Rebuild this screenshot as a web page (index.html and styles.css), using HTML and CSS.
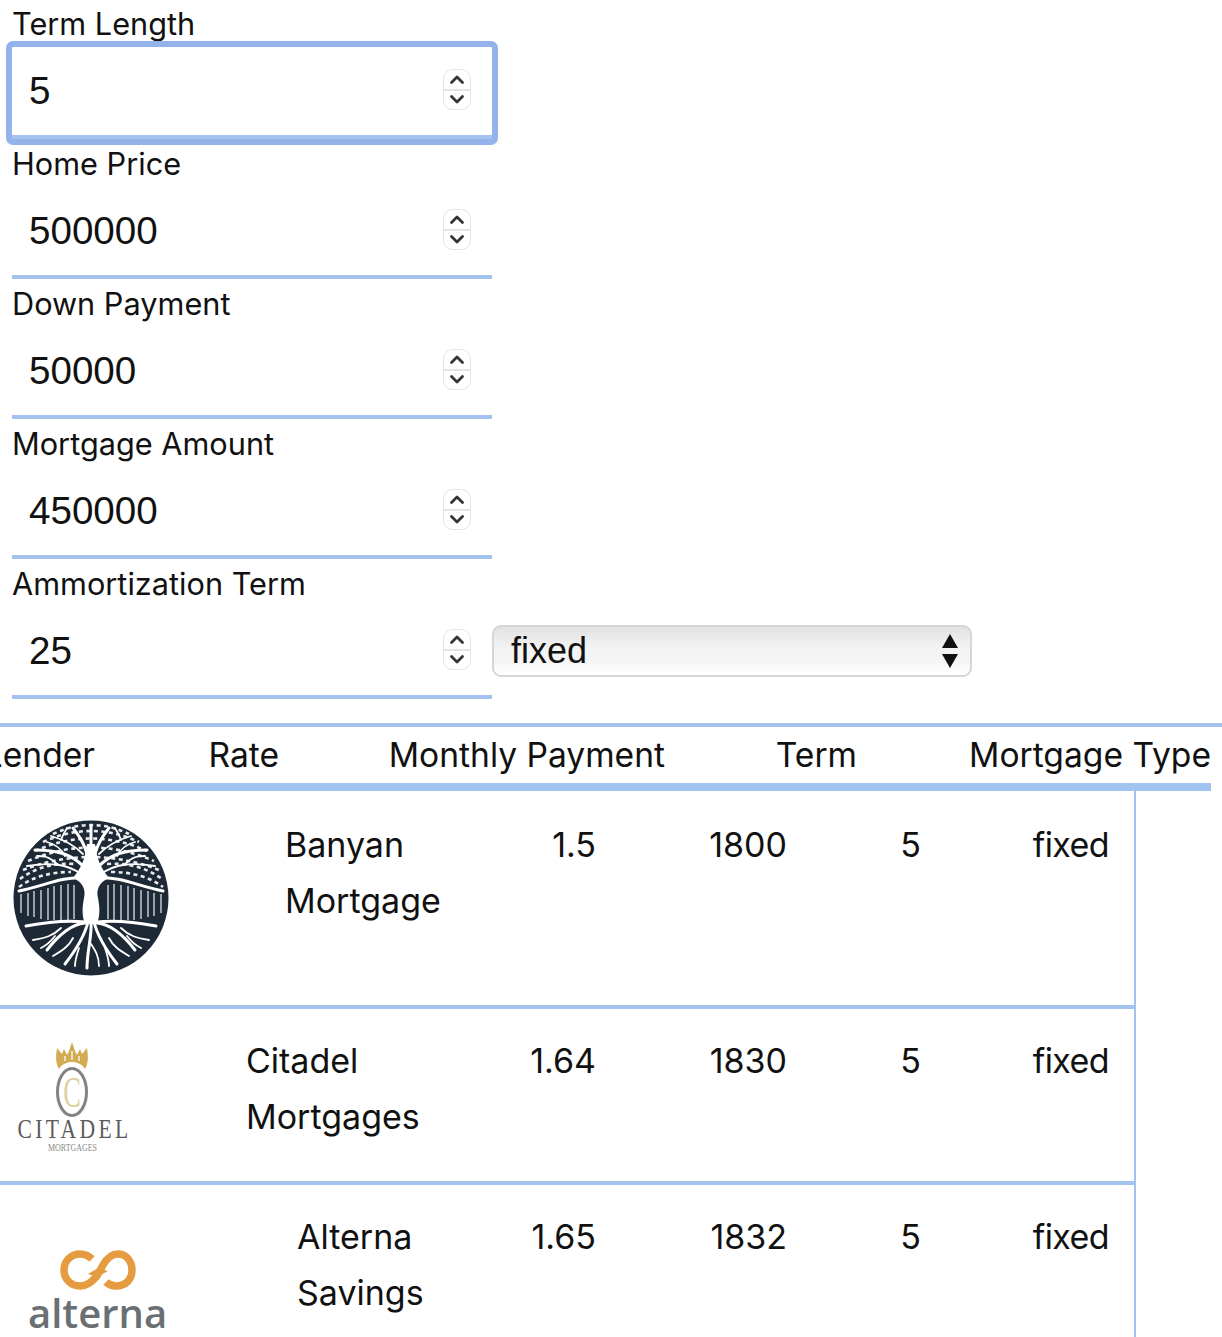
FILE: index.html
```html
<!DOCTYPE html>
<html lang="en">
<head>
<meta charset="utf-8">
<title>Mortgage rates</title>
<link rel="stylesheet" href="styles.css">
</head>
<body>
<form class="form">
  <div class="group">
    <div class="label">Term Length</div>
    <div class="field-row">
      <div class="field field-focus"><span class="value">5</span>
        <svg class="spin" viewBox="0 0 28 41"><rect x=".5" y=".5" width="27" height="40" rx="9"/><path class="mid" d="M1 21h26"/><path class="chev" d="M8.500 13.500 14 8l5.500 5.500M8.500 27.500 14 33l5.500-5.500"/></svg>
      </div>
    </div>
  </div>
  <div class="group">
    <div class="label">Home Price</div>
    <div class="field-row">
      <div class="field"><span class="value">500000</span>
        <svg class="spin" viewBox="0 0 28 41"><rect x=".5" y=".5" width="27" height="40" rx="9"/><path class="mid" d="M1 21h26"/><path class="chev" d="M8.500 13.500 14 8l5.500 5.500M8.500 27.500 14 33l5.500-5.500"/></svg>
      </div>
    </div>
  </div>
  <div class="group">
    <div class="label">Down Payment</div>
    <div class="field-row">
      <div class="field"><span class="value">50000</span>
        <svg class="spin" viewBox="0 0 28 41"><rect x=".5" y=".5" width="27" height="40" rx="9"/><path class="mid" d="M1 21h26"/><path class="chev" d="M8.500 13.500 14 8l5.500 5.500M8.500 27.500 14 33l5.500-5.500"/></svg>
      </div>
    </div>
  </div>
  <div class="group">
    <div class="label">Mortgage Amount</div>
    <div class="field-row">
      <div class="field"><span class="value">450000</span>
        <svg class="spin" viewBox="0 0 28 41"><rect x=".5" y=".5" width="27" height="40" rx="9"/><path class="mid" d="M1 21h26"/><path class="chev" d="M8.500 13.500 14 8l5.500 5.500M8.500 27.500 14 33l5.500-5.500"/></svg>
      </div>
    </div>
  </div>
  <div class="group">
    <div class="label">Ammortization Term</div>
    <div class="field-row">
      <div class="field"><span class="value">25</span>
        <svg class="spin" viewBox="0 0 28 41"><rect x=".5" y=".5" width="27" height="40" rx="9"/><path class="mid" d="M1 21h26"/><path class="chev" d="M8.500 13.500 14 8l5.500 5.500M8.500 27.500 14 33l5.500-5.500"/></svg>
      </div>
      <div class="select"><span>fixed</span>
        <svg class="select-arrows" viewBox="0 0 16 34"><path d="M8 0l8 14H0zM0 20h16L8 34z"/></svg>
      </div>
    </div>
  </div>
</form>

<section class="table">
  <div class="head">
    <div class="th">Lender</div>
    <div class="th">Rate</div>
    <div class="th">Monthly Payment</div>
    <div class="th">Term</div>
    <div class="th">Mortgage Type</div>
  </div>
  <div class="body">
    <div class="row row-banyan">
      <div class="lender">
        <svg class="logo logo-banyan" viewBox="0 0 156 156">
          <circle cx="78" cy="78" r="77.500" fill="#1e2936"/>
          <g class="bars">
            <path d="M8 74V93M15 73V96M21 71V97M28 70V99M35 68V100M41 66V100M48 65V100M55 64V100M61 65V99"/>
            <path d="M95 65V99M101 64V100M108 65V100M115 66V100M121 68V100M128 70V99M135 71V97M141 73V96M148 74V93"/>
          </g>
          <g class="leaves">
            <path d="M40 14Q78-4 116 14"/>
            <path d="M30 22Q78 0 126 22"/>
            <path d="M22 31Q78 6 134 31"/>
            <path d="M15 41Q78 14 141 41"/>
            <path d="M10 50Q78 24 146 50"/>
            <path d="M7 59Q30 42 62 44M94 44Q126 42 149 59"/>
            <path d="M6 67Q26 52 58 52M98 52Q130 52 150 67"/>
          </g>
          <path class="trunk" d="M60 58C70 62 73 70 71 78C69 88 69 96 72 104H84C87 96 87 88 85 78C83 70 86 62 96 58C88 48 84 40 82 24H74C72 40 68 48 60 58Z"/>
          <g class="branches">
            <path class="bough" d="M70 58C52 56 30 66 6 71M86 58C104 56 126 66 150 71"/>
            <path class="bough" d="M74 34C72 26 68 18 60 8M82 34C84 26 88 18 96 8M78 30V6"/>
            <path class="bough" d="M70 46C58 34 44 30 22 30M86 46C98 34 112 30 134 30"/>
            <path d="M68 54C54 44 38 42 14 46M88 54C102 44 118 42 142 46"/>
            <path d="M70 34C62 26 52 20 38 16M86 34C94 26 104 20 118 16"/>
            <path d="M52 36C48 28 42 24 34 22M104 36C108 28 114 24 122 22M44 44C36 36 30 36 24 36M112 44C120 36 126 36 132 36M48 20C50 14 52 12 54 8M108 20C106 14 104 12 102 8"/>
          </g>
          <g class="roots">
            <path class="bough" d="M75 102C72 114 66 126 52 144M81 102C84 114 90 126 104 144M78 102C79 118 74 130 74 148"/>
            <path class="bough" d="M72 103C60 104 48 112 34 130M84 103C96 104 108 112 122 130"/>
            <path class="bough" d="M72 102C54 100 34 102 13 106M84 102C102 100 122 102 143 106"/>
            <path d="M48 108C40 116 32 118 20 120M108 108C116 116 124 118 136 120M60 118C56 126 50 130 40 136M96 118C100 126 106 130 116 136M78 124C82 130 86 136 86 146M66 128C64 134 62 140 62 146M92 128C94 134 96 140 96 146M42 116C36 124 32 126 28 128M114 116C120 124 124 126 128 128"/>
          </g>
        </svg>
        <div class="name name-banyan">Banyan<br>Mortgage</div>
      </div>
      <div class="td">1.5</div><div class="td">1800</div><div class="td">5</div><div class="td td-type">fixed</div>
    </div>
    <div class="row row-citadel">
      <div class="lender">
        <svg class="logo logo-citadel" viewBox="0 0 114 112">
          <path d="M43 27C39 20 40 13 41 6L46 12 48 7 51 13 53 9 56 0 59 9 61 13 64 7 66 12 71 6C72 13 73 20 69 27C66 22 61 20 56 20C51 20 46 22 43 27Z" fill="#d3ab52"/>
          <path class="crown-cut" d="M49 14V19M56 9V18M63 14V19"/>
          <ellipse cx="56" cy="50" rx="14.500" ry="23.500" fill="none" stroke="#85837f" stroke-width="3"/>
          <text class="citadel-c" transform="translate(56 65) scale(.6 1)">C</text>
          <text class="citadel-name" transform="translate(58.500 96) scale(.8 1)">CITADEL</text>
          <text class="citadel-sub" x="32" y="109" textLength="49" lengthAdjust="spacingAndGlyphs">MORTGAGES</text>
        </svg>
        <div class="name name-citadel">Citadel<br>Mortgages</div>
      </div>
      <div class="td">1.64</div><div class="td">1830</div><div class="td">5</div><div class="td td-type">fixed</div>
    </div>
    <div class="row row-alterna">
      <div class="lender">
        <svg class="logo logo-alterna" viewBox="0 0 140 85">
          <path class="alterna-mark" d="M64 9C60 5 56 4 52 4C43 4 36 11 36 20C36 29 43 36 52 36C60 36 64 31 69 26L75 15C79 8 84 4 90 4C98 4 104 11 104 20C104 29 98 36 88 36C84 36 81 35 78 32"/>
          <path class="alterna-tip" d="M60 24 70 18 80 21 69 27Z"/>
          <text class="alterna-word" x="0" y="78">alterna</text>
        </svg>
        <div class="name name-alterna">Alterna<br>Savings</div>
      </div>
      <div class="td">1.65</div><div class="td">1832</div><div class="td">5</div><div class="td td-type">fixed</div>
    </div>
  </div>
</section>
</body>
</html>
```
FILE: styles.css
```css
html, body { margin: 0; padding: 0; background: #fff; }
body {
  height: 1337px;
  overflow: hidden;
  color: #111;
  font-family: "Liberation Sans", Arial, sans-serif;
}
.form { display: flex; flex-direction: column; }
.group { display: flex; flex-direction: column; }
.label {
  height: 48px;
  padding-left: 12px;
  font-family: Inter, "Liberation Sans", sans-serif;
  font-size: 30.700px;
  line-height: 50px;
}
.group:first-child .label { margin-top: -1px; }
.field-row { display: flex; align-items: center; padding-left: 12px; }
.field {
  box-sizing: border-box;
  display: flex;
  align-items: center;
  justify-content: space-between;
  width: 480px;
  height: 92px;
  padding: 0 21px 0 17px;
  border-bottom: 4px solid #a3c3ee;
}
.field-focus { outline: 6px solid #94b3ea; border-radius: 1px; }
.value { font-size: 38.600px; }
.spin { width: 28px; height: 41px; flex: none; margin-bottom: 4px; }
.spin rect { fill: #fff; stroke: #e4e4e4; }
.spin .mid { stroke: #dcdcdc; stroke-width: 1.500; fill: none; }
.spin .chev { stroke: #333; stroke-width: 2.800; fill: none; stroke-linecap: round; stroke-linejoin: round; }
.select {
  box-sizing: border-box;
  display: flex;
  align-items: center;
  justify-content: space-between;
  width: 480px;
  height: 52px;
  margin-bottom: 4px;
  padding: 0 12px 0 17px;
  border: 2px solid #d6d6d6;
  border-radius: 9px;
  background: linear-gradient(#e2e2e2, #f3f3f3 45%, #f6f6f6 75%, #fff);
  font-size: 36px;
}
.select-arrows { width: 16px; height: 34px; fill: #111; }

.table { margin-top: 28px; }
.head {
  display: grid;
  grid-template-columns: 95px 184px 386px 192px 354px;
  width: 1211px;
  height: 56px;
  position: relative;
  border-bottom: 8px solid #a1c3f0;
}
.head::before {
  content: "";
  position: absolute;
  left: 0;
  top: -4px;
  width: 1222px;
  height: 4px;
  background: #a3c3ee;
}
.th {
  display: flex;
  justify-content: flex-end;
  white-space: nowrap;
  font-family: Inter, "Liberation Sans", sans-serif;
  font-size: 33.600px;
  line-height: 56px;
}
.body { width: 1136px; box-sizing: border-box; border-right: 2px solid #a3c3ee; }
.row {
  display: grid;
  grid-template-columns: 460px 136px 191px 134px 188px;
  box-sizing: border-box;
  padding-top: 24px;
  border-bottom: 4px solid #a3c3ee;
  font-family: Inter, "Liberation Sans", sans-serif;
  font-size: 34px;
  line-height: 56px;
}
.row-banyan { height: 218px; padding-top: 26px; }
.row-citadel { height: 176px; }
.row-alterna { height: 152px; border-bottom: 0; }
.td { text-align: right; }
.td-type { letter-spacing: -.6px; }
.lender { display: flex; align-items: flex-start; }
.name { white-space: nowrap; }
.logo { flex: none; display: block; }
.logo-banyan { width: 156px; height: 156px; margin: 3px 0 0 13px; }
.name-banyan { margin-left: 116px; }
.logo-citadel { width: 114px; height: 112px; margin: 9px 0 0 16px; }
.name-citadel { margin-left: 116px; }
.logo-alterna { width: 140px; height: 85px; margin: 41px 0 0 28px; }
.name-alterna { margin-left: 129px; }

.bars path { stroke: #b9bec4; stroke-width: 1.600; fill: none; }
.leaves path { stroke: #e9ecee; stroke-width: 2.600; fill: none; stroke-dasharray: 4 3.500; }
.trunk { fill: #fff; }
.branches path { stroke: #fff; stroke-width: 1.800; fill: none; stroke-linecap: round; }
.roots path { stroke: #fff; stroke-width: 1.800; fill: none; stroke-linecap: round; }
.branches .bough, .roots .bough { stroke-width: 3; }

.crown-cut { stroke: #fff; stroke-width: 1.200; fill: none; }
.citadel-c { font-family: "Liberation Serif", serif; font-size: 44px; fill: #e0cf9f; text-anchor: middle; }
.citadel-name { font-family: "Liberation Serif", serif; font-size: 27px; letter-spacing: 4.200px; fill: #5c5c5c; text-anchor: middle; }
.citadel-sub { font-family: "Liberation Serif", serif; font-size: 9.500px; fill: #8a8a8a; }
.alterna-mark { stroke: #e59c40; stroke-width: 7.500; fill: none; }
.alterna-tip { fill: #e59c40; }
.alterna-word { font-family: "Open Sans", sans-serif; font-weight: 600; font-size: 40px; fill: #6a6f74; }
```
